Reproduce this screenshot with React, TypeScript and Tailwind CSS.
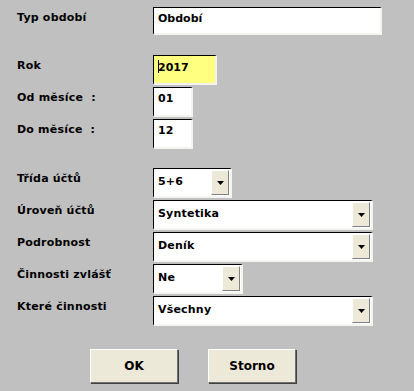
const font = { fontFamily: '"DejaVu Sans", Verdana, sans-serif' };

function Label({ text }: { text: string }) {
  return <div className="pt-[4px] text-[11px] font-bold leading-[14px] tracking-[0.2px] text-black whitespace-pre">{text}</div>;
}

function TextBox({ value, w, h, yellow, caret }: { value: string; w: string; h: string; yellow?: boolean; caret?: boolean }) {
  return (
    <div
      className={`${w} ${h} border-t border-l border-t-black border-l-black border-b-2 border-r-2 border-b-[#f4f4f0] border-r-[#f4f4f0] pl-[4px] pt-[4px] text-[11px] font-bold leading-[14px] text-black ${yellow ? 'bg-[#ffff80]' : 'bg-white'}`}
    >
      {caret && <span className="inline-block h-[13px] w-px -mr-px align-[-2px] bg-black" />}
      {value}
    </div>
  );
}

function Select({ value, w }: { value: string; w: string }) {
  return (
    <div className={`${w} h-[30px] flex border-t border-l border-t-black border-l-black border-b-2 border-r-2 border-b-[#f4f4f0] border-r-[#f4f4f0] bg-white`}>
      <div className="flex-1 flex items-center pl-[4px] text-[11px] font-bold tracking-[0.2px] text-black">{value}</div>
      <div className="w-[18px] my-[1px] mr-[1px] flex items-center justify-center bg-[#ece9d8] border-t border-l border-t-white border-l-white border-b border-r border-b-[#808080] border-r-[#808080]">
        <svg width="7" height="4" viewBox="0 0 7 4"><path d="M0 0h7L3.5 4z" fill="#000" /></svg>
      </div>
    </div>
  );
}

function Button({ text }: { text: string }) {
  return (
    <button className="w-[88px] h-[34px] bg-[#ece9d8] border border-t-white border-l-white border-b-[#707070] border-r-[#707070] shadow-[1px_1px_0_#404040] text-[12px] font-bold text-black">
      {text}
    </button>
  );
}

export default function App() {
  return (
    <div className="w-[414px] h-[391px] bg-[#c0c0c0] overflow-hidden" style={font}>
      <div className="grid grid-cols-[136px_1fr] pl-[17px] pt-[7px]">
        <Label text="Typ období" />
        <TextBox value="Období" w="w-[229px]" h="h-[28px]" />
      </div>
      <div className="grid grid-cols-[136px_1fr] gap-y-[2px] pl-[17px] pt-[20px]">
        <Label text="Rok" />
        <TextBox value="2017" w="w-[64px]" h="h-[30px]" yellow caret />
        <Label text="Od měsíce  :" />
        <TextBox value="01" w="w-[40px]" h="h-[30px]" />
        <Label text="Do měsíce  :" />
        <TextBox value="12" w="w-[40px]" h="h-[30px]" />
      </div>
      <div className="grid grid-cols-[136px_1fr] gap-y-[2px] pl-[17px] pt-[19px]">
        <Label text="Třída účtů" />
        <Select value="5+6" w="w-[79px]" />
        <Label text="Úroveň účtů" />
        <Select value="Syntetika" w="w-[220px]" />
        <Label text="Podrobnost" />
        <Select value="Deník" w="w-[220px]" />
        <Label text="Činnosti zvlášť" />
        <Select value="Ne" w="w-[90px]" />
        <Label text="Které činnosti" />
        <Select value="Všechny" w="w-[220px]" />
      </div>
      <div className="flex gap-[30px] pl-[90px] pt-[23px]">
        <Button text="OK" />
        <Button text="Storno" />
      </div>
    </div>
  );
}
